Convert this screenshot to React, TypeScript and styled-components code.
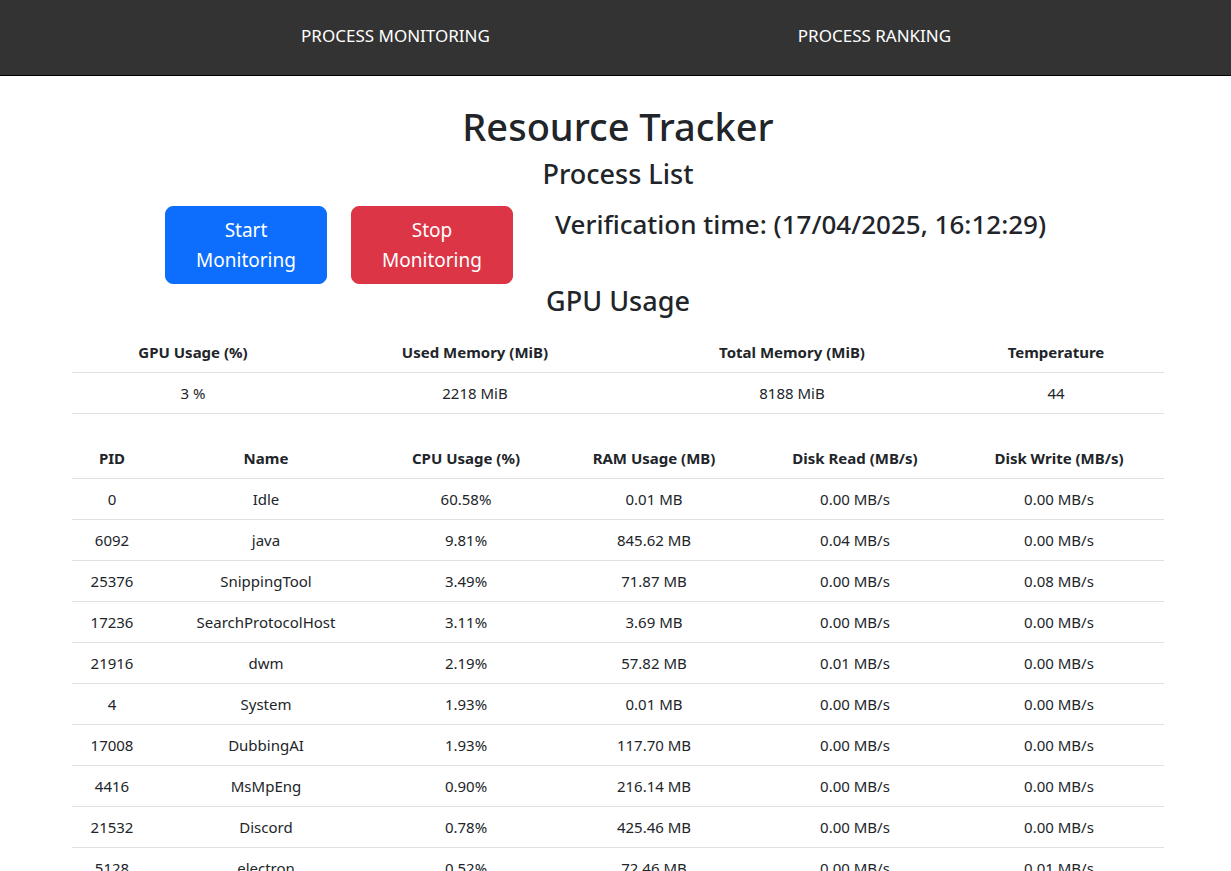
import React from 'react';
import styled, { createGlobalStyle } from 'styled-components';

const GlobalStyle = createGlobalStyle`
  body {
    margin: 0;
    background: #fff;
    color: #212529;
    font-family: "Segoe UI", "Noto Sans", "Liberation Sans", sans-serif;
    font-size: 16px;
    line-height: 1.5;
  }
  * { box-sizing: border-box; }
`;

const gpuCols = [242, 322, 312, 216];
const procCols = [80, 228, 172, 204, 198, 210];

const processes = [
  ['0', 'Idle', '60.58%', '0.01 MB', '0.00 MB/s', '0.00 MB/s'],
  ['6092', 'java', '9.81%', '845.62 MB', '0.04 MB/s', '0.00 MB/s'],
  ['25376', 'SnippingTool', '3.49%', '71.87 MB', '0.00 MB/s', '0.08 MB/s'],
  ['17236', 'SearchProtocolHost', '3.11%', '3.69 MB', '0.00 MB/s', '0.00 MB/s'],
  ['21916', 'dwm', '2.19%', '57.82 MB', '0.01 MB/s', '0.00 MB/s'],
  ['4', 'System', '1.93%', '0.01 MB', '0.00 MB/s', '0.00 MB/s'],
  ['17008', 'DubbingAI', '1.93%', '117.70 MB', '0.00 MB/s', '0.00 MB/s'],
  ['4416', 'MsMpEng', '0.90%', '216.14 MB', '0.00 MB/s', '0.00 MB/s'],
  ['21532', 'Discord', '0.78%', '425.46 MB', '0.00 MB/s', '0.00 MB/s'],
  ['5128', 'electron', '0.52%', '72.46 MB', '0.00 MB/s', '0.01 MB/s'],
  ['9876', 'chrome', '0.45%', '310.21 MB', '0.00 MB/s', '0.00 MB/s'],
];

const App = () => {
  return (
    <>
      <GlobalStyle />
      <NavBar>
        <NavLinks>
          <NavItem href="#">PROCESS MONITORING</NavItem>
          <NavItem href="#">PROCESS RANKING</NavItem>
        </NavLinks>
      </NavBar>
      <Container>
        <Title>Resource Tracker</Title>
        <SubTitle>Process List</SubTitle>
        <Controls>
          <Button variant="start">Start Monitoring</Button>
          <Button variant="stop">Stop Monitoring</Button>
          <Verification>Verification time: (17/04/2025, 16:12:29)</Verification>
        </Controls>
        <SubTitle>GPU Usage</SubTitle>
        <Table mb={24}>
          <colgroup>
            {gpuCols.map((w, i) => <col key={i} style={{ width: w }} />)}
          </colgroup>
          <thead>
            <tr>
              <Th>GPU Usage (%)</Th>
              <Th>Used Memory (MiB)</Th>
              <Th>Total Memory (MiB)</Th>
              <Th>Temperature</Th>
            </tr>
          </thead>
          <tbody>
            <tr>
              <Td>3 %</Td>
              <Td>2218 MiB</Td>
              <Td>8188 MiB</Td>
              <Td>44</Td>
            </tr>
          </tbody>
        </Table>
        <Table mb={16}>
          <colgroup>
            {procCols.map((w, i) => <col key={i} style={{ width: w }} />)}
          </colgroup>
          <thead>
            <tr>
              <Th>PID</Th>
              <Th>Name</Th>
              <Th>CPU Usage (%)</Th>
              <Th>RAM Usage (MB)</Th>
              <Th>Disk Read (MB/s)</Th>
              <Th>Disk Write (MB/s)</Th>
            </tr>
          </thead>
          <tbody>
            {processes.map((p) => (
              <tr key={p[0]}>
                {p.map((c, i) => <Td key={i}>{c}</Td>)}
              </tr>
            ))}
          </tbody>
        </Table>
      </Container>
    </>
  );
};

export default App;

const NavBar = styled.nav`
  height: 76px;
  background-color: #333333;
  border-bottom: 1px solid #000;
  display: flex;
  align-items: center;
`;

const NavLinks = styled.div`
  display: grid;
  grid-template-columns: 479px 479px;
  margin-left: 156px;
`;

const NavItem = styled.a`
  color: #fff;
  text-decoration: none;
  text-align: center;
  font-size: 17px;
  margin-top: -4px;
`;

const Container = styled.main`
  width: 1092px;
  margin-left: 72px;
  padding-top: 26px;
`;

const Title = styled.h1`
  margin: 0 0 8px;
  text-align: center;
  font-size: 38px;
  font-weight: 500;
  line-height: 48px;
`;

const SubTitle = styled.h3`
  margin: 0;
  text-align: center;
  font-size: 27px;
  font-weight: 500;
  line-height: 1.2;
`;

const Controls = styled.div`
  display: flex;
  align-items: flex-start;
  padding-left: 93px;
  margin: 16px 0 1px;
`;

const Button = styled.button<{ variant: 'start' | 'stop' }>`
  width: 162px;
  height: 78px;
  margin-right: ${(p) => (p.variant === 'start' ? '24px' : '42px')};
  padding: 8px 16px;
  border: 1px solid ${(p) => (p.variant === 'start' ? '#0d6efd' : '#dc3545')};
  border-radius: 8px;
  background-color: ${(p) => (p.variant === 'start' ? '#0d6efd' : '#dc3545')};
  color: #fff;
  font-family: inherit;
  font-size: 19px;
  line-height: 30px;
  cursor: pointer;
`;

const Verification = styled.h3`
  margin: 0;
  font-size: 26px;
  font-weight: 500;
  line-height: 36px;
`;

const Table = styled.table<{ mb: number }>`
  width: 100%;
  table-layout: fixed;
  border-collapse: collapse;
  margin: 14px 0 ${(p) => p.mb}px;
  &:last-child { margin-top: 0; }
`;

const Th = styled.th`
  padding: 8px;
  font-size: 15px;
  font-weight: 700;
  line-height: 24px;
  text-align: center;
  border-bottom: 1px solid #dee2e6;
`;

const Td = styled.td`
  padding: 8px;
  font-size: 15px;
  line-height: 24px;
  text-align: center;
  border-bottom: 1px solid #dee2e6;
`;
